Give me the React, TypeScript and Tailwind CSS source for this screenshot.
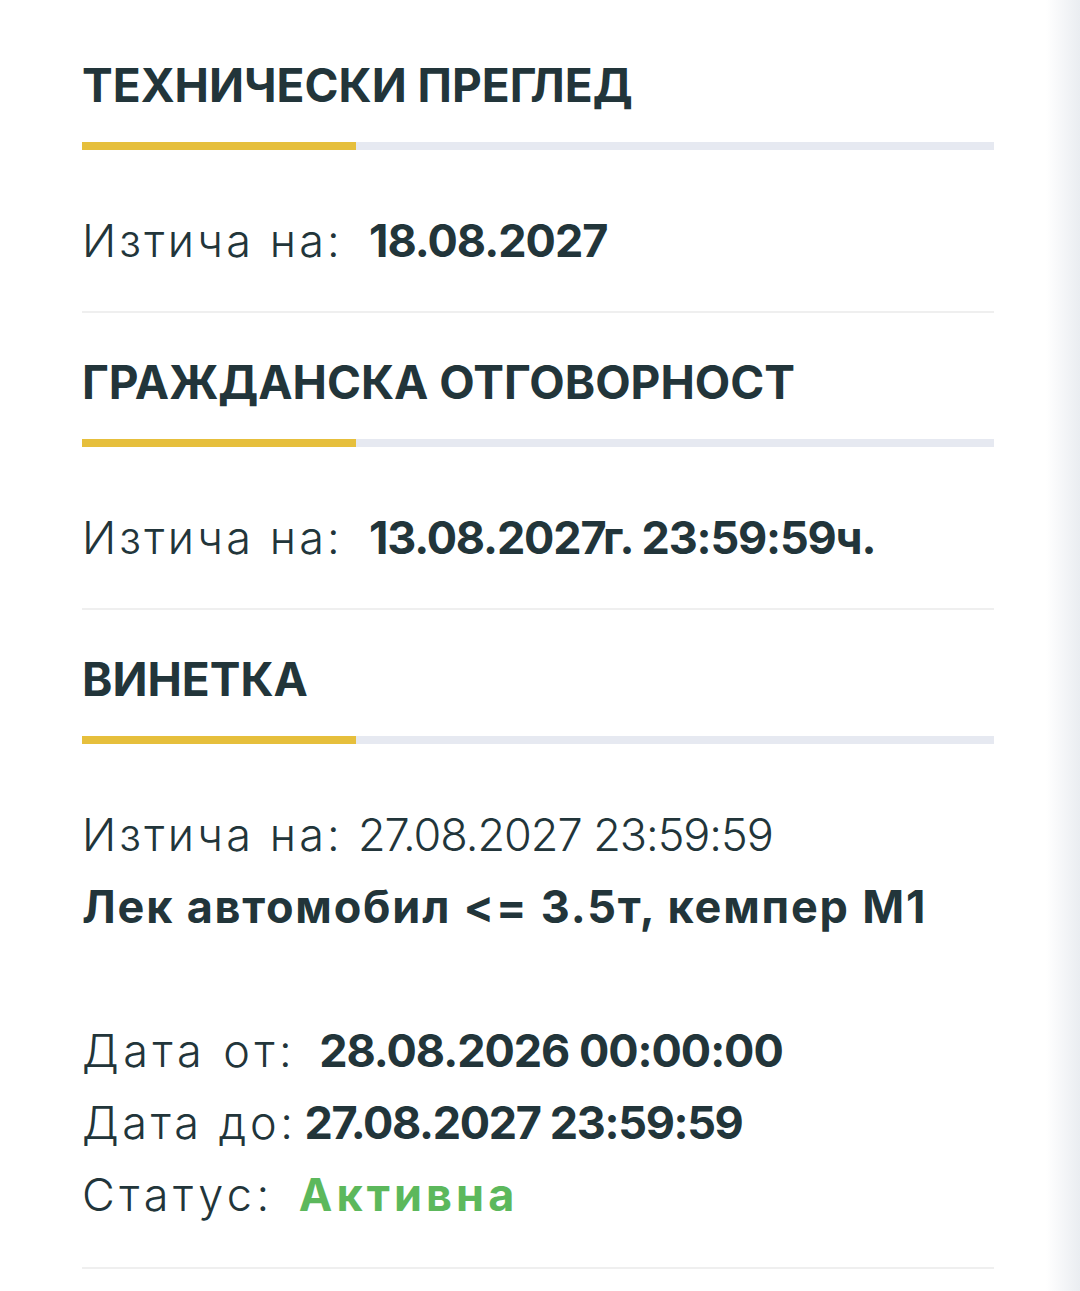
import type { ReactNode } from 'react';

const font = { fontFamily: 'Inter, "Noto Sans", "DejaVu Sans", sans-serif' };

function Section({ title, children }: { title: string; children: ReactNode }) {
  return (
    <section>
      <h2 className="text-[46px] leading-[72px] font-bold text-[#22353a] uppercase">{title}</h2>
      {/* yellow accent on grey track */}
      <div className="flex h-2 mt-[21px]">
        <div className="w-[274px] bg-[#e6bf3c]" />
        <div className="flex-1 bg-[#e6e9f1]" />
      </div>
      {children}
    </section>
  );
}

const Divider = ({ className = '' }: { className?: string }) => (
  <div className={`h-[2px] bg-[#efefef] ${className}`} />
);

export default function App() {
  return (
    <div lang="bg" style={font} className="flex min-h-[1291px] w-full bg-white text-[#22353a]">
      <div className="flex-1 pl-[82px] pr-[52px] pt-[49px]">
        <Section title="Технически преглед">
          <p className="mt-[55px] flex text-[45px] leading-[72px] whitespace-nowrap">
            <span className="font-light tracking-[0.07em]">Изтича на:</span>
            <span className="ml-[26px] font-bold tracking-[-0.022em]">18.08.2027</span>
          </p>
          <Divider className="mt-[34px]" />
        </Section>

        <div className="mt-[33px]">
          <Section title="Гражданска отговорност">
            <p className="mt-[55px] flex text-[45px] leading-[72px] whitespace-nowrap">
              <span className="font-light tracking-[0.07em]">Изтича на:</span>
              <span className="ml-[26px] font-bold tracking-[-0.026em]">13.08.2027г. 23:59:59ч.</span>
            </p>
            <Divider className="mt-[34px]" />
          </Section>
        </div>

        <div className="mt-[33px]">
          <Section title="Винетка">
            <div className="mt-[55px] text-[45px] leading-[72px] whitespace-nowrap">
              <p className="flex font-light">
                <span className="tracking-[0.07em]">Изтича на:</span>
                <span className="ml-[15px] tracking-[-0.023em]">27.08.2027 23:59:59</span>
              </p>
              <p className="font-bold tracking-[0.04em]">Лек автомобил &lt;= 3.5т, кемпер М1</p>
              <p>&nbsp;</p>
              <p className="flex">
                <span className="font-light tracking-[0.1em]">Дата от:</span>
                <span className="ml-[23px] font-bold tracking-[-0.023em]">28.08.2026 00:00:00</span>
              </p>
              <p className="flex">
                <span className="font-light tracking-[0.08em]">Дата до:</span>
                <span className="ml-[8px] font-bold tracking-[-0.03em]">27.08.2027 23:59:59</span>
              </p>
              <p className="flex">
                <span className="font-light tracking-[0.1em]">Статус:</span>
                <span className="ml-[25px] font-bold tracking-[0.09em] text-[#5cb85c]">Активна</span>
              </p>
            </div>
            <Divider className="mt-[36px]" />
          </Section>
        </div>
      </div>
      <div className="w-[34px] bg-gradient-to-r from-white to-[#eaedf1]" />
    </div>
  );
}
